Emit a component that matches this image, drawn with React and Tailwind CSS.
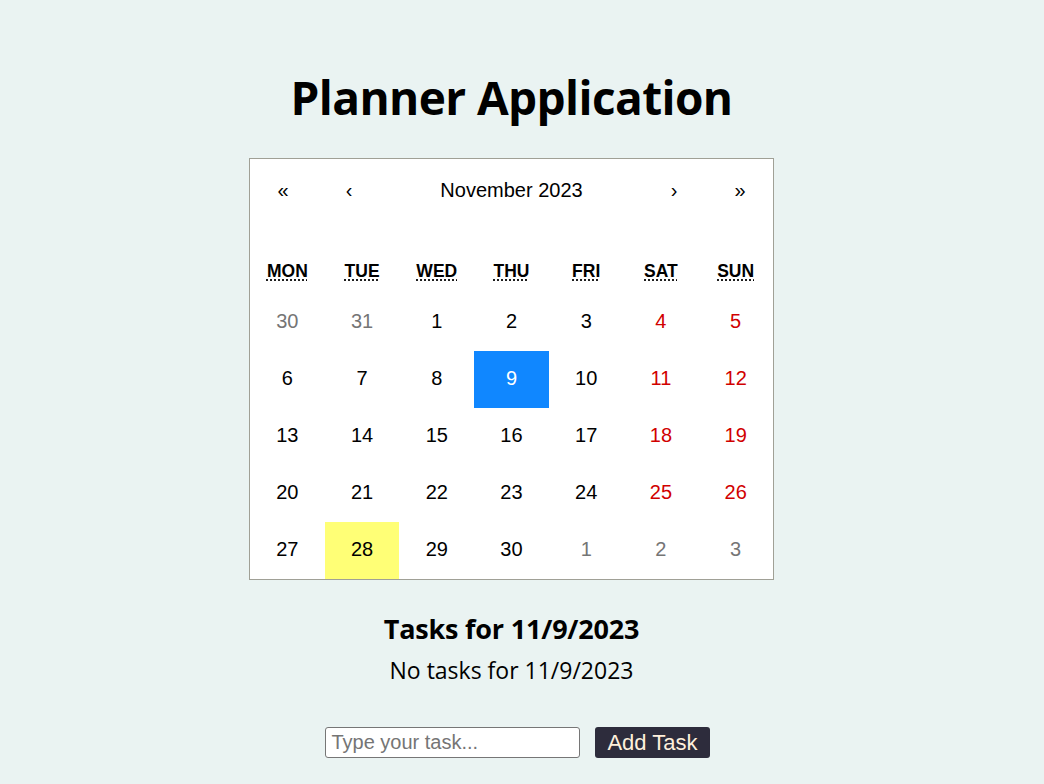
import React, { useState } from "react";

const weekdays = ["Mon", "Tue", "Wed", "Thu", "Fri", "Sat", "Sun"];

// November 2023 grid, Monday first
const buildDays = () => {
  const days = [];
  days.push({ n: 30, other: true }, { n: 31, other: true });
  for (let i = 1; i <= 30; i++) days.push({ n: i, other: false });
  days.push({ n: 1, other: true }, { n: 2, other: true }, { n: 3, other: true });
  return days;
};

const Calendar = ({ selected, today, onSelect }) => {
  const days = buildDays();

  const tileClass = (day, idx) => {
    const col = idx % 7;
    if (!day.other && day.n === selected) return "bg-[#1087ff] text-white";
    if (!day.other && day.n === today) return "bg-[#ffff76] text-black";
    if (day.other) return "bg-white text-[#757575]";
    if (col >= 5) return "bg-white text-[#d10000]";
    return "bg-white text-black";
  };

  return (
    <div className="w-[525px] bg-white border border-[#a0a096]" style={{ fontFamily: "'Liberation Sans', Arial, sans-serif" }}>
      <div className="flex h-[62px] items-center text-[20px]">
        <button className="w-[66px] h-full flex items-center justify-center">«</button>
        <button className="w-[66px] h-full flex items-center justify-center">‹</button>
        <button className="grow h-full flex items-center justify-center">November 2023</button>
        <button className="w-[66px] h-full flex items-center justify-center">›</button>
        <button className="w-[66px] h-full flex items-center justify-center">»</button>
      </div>

      <div className="grid grid-cols-7 mt-[27px] h-[46px] items-center text-[17.5px] font-bold uppercase text-center">
        {weekdays.map((d) => (
          <div key={d}>
            <abbr className="underline decoration-dotted underline-offset-[3px]">{d}</abbr>
          </div>
        ))}
      </div>

      <div className="grid grid-cols-7 text-[20px]">
        {days.map((day, idx) => (
          <button
            key={idx}
            onClick={() => !day.other && onSelect(day.n)}
            className={`h-[57px] flex items-center justify-center pb-[3px] ${tileClass(day, idx)}`}
          >
            {day.n}
          </button>
        ))}
      </div>
    </div>
  );
};

const App = () => {
  const [selected, setSelected] = useState(9);
  const [task, setTask] = useState("");
  const dateLabel = `11/${selected}/2023`;

  return (
    <div
      className="min-h-[784px] w-full bg-[#eaf3f2] flex flex-col items-center pr-[21px] text-black"
      style={{ fontFamily: "'Open Sans', 'Noto Sans', sans-serif" }}
    >
      <h1 className="mt-[68px] text-[46px] leading-[58px] font-bold tracking-[-0.6px]">Planner Application</h1>

      <div className="mt-[32px]">
        <Calendar selected={selected} today={28} onSelect={setSelected} />
      </div>

      <h2 className="mt-[33px] text-[27px] leading-[32px] font-bold tracking-[-0.2px]">Tasks for {dateLabel}</h2>
      <p className="mt-[11px] text-[23px] leading-[28px]">No tasks for {dateLabel}</p>

      <div className="mt-[43px] flex items-center gap-[15px] ml-[12px]" style={{ fontFamily: "'Liberation Sans', Arial, sans-serif" }}>
        <input
          type="text"
          value={task}
          onChange={(e) => setTask(e.target.value)}
          placeholder="Type your task..."
          className="w-[255px] h-[31px] bg-white border border-[#767676] rounded-[3px] px-[5px] text-[20px] placeholder:text-[#757575] outline-none"
        />
        <button className="h-[31px] px-[12px] rounded-[3px] bg-[#2d2c3c] text-[#fff0dc] text-[22px] leading-[31px]">Add Task</button>
      </div>
    </div>
  );
};

export default App;
